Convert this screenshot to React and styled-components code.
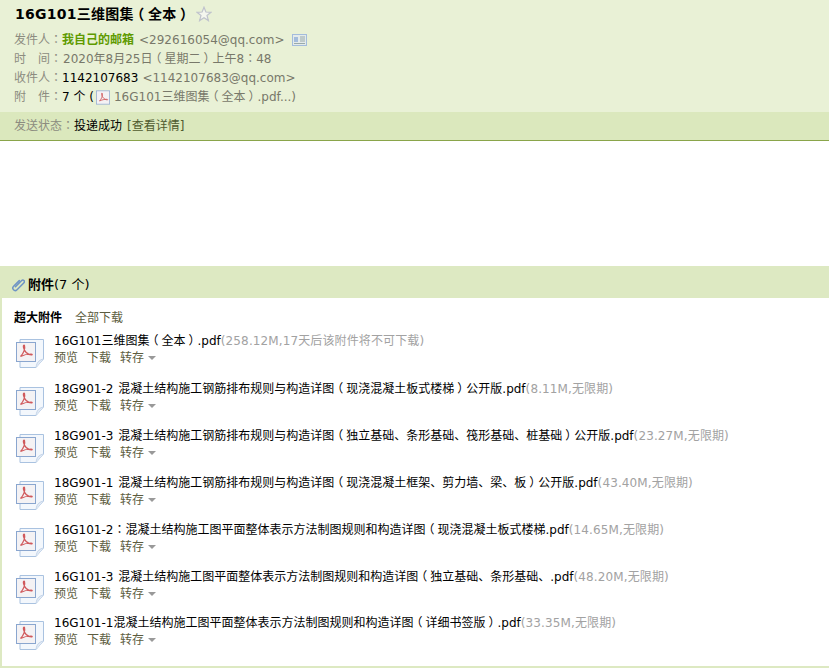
import React from 'react'
import styled, { createGlobalStyle } from 'styled-components'

const Global = createGlobalStyle`
  html, body { margin: 0; padding: 0; background: #fff; }
  body { font: 12px/20px "DejaVu Sans", "Noto Sans CJK SC", sans-serif; color: #000; }
`
const Page = styled.div`
  width: 829px;
  height: 672px;
  overflow: hidden;
`
const MailHead = styled.div`
  background: #e9f1d6;
  padding: 4px 0 6px 14px;
  height: 102px;
`
const Title = styled.div`
  display: flex;
  align-items: center;
  height: 20px;
  margin: 0 0 6px 1px;
  font-size: 14px;
  font-weight: bold;
  letter-spacing: 0.25px;
`
const Star = styled.svg`
  margin-left: 5px;
  flex: none;
`
const Line = styled.div`
  height: 19px;
  line-height: 19px;
  display: flex;
  align-items: center;
  white-space: nowrap;
  color: #000;
  &:nth-of-type(2) { height: 20px; }
`
const Label = styled.span`
  color: #8c8c80;
`
const Sender = styled.b`
  color: #5f9a00;
`
const Dim = styled.span`
  color: #78786a;
  margin-left: ${p => p.$gap || 0}px;
`
const Card = styled.svg`
  margin-left: 7px;
  flex: none;
`
const TinyPdf = styled.svg`
  margin: 0 4px 0 2px;
  flex: none;
`
const StatusBar = styled.div`
  height: 28px;
  line-height: 28px;
  padding-left: 14px;
  background: #dbe8bd;
  border-bottom: 1px solid #8aa54a;
`
const Link = styled.span`
  color: #4f5a2e;
  margin-left: ${p => p.$gap || 0}px;
`
const Blank = styled.div`
  height: 125px;
`
const AttachBox = styled.div`
  border: solid #dde9c2;
  border-width: 0 0 2px 2px;
  height: 402px;
  box-sizing: border-box;
`
const AttachHead = styled.div`
  display: flex;
  align-items: center;
  height: 27px;
  margin-left: -2px;
  padding: 5px 0 0 11px;
  background: #dde9c2;
  font-size: 13px;
`
const Clip = styled.svg`
  margin-right: 3px;
  flex: none;
`
const Body = styled.div`
  padding: 10px 0 0 12px;
`
const BigTitle = styled.div`
  height: 20px;
  line-height: 20px;
  margin-bottom: 5px;
`
const All = styled.span`
  color: #5c5c40;
  margin-left: 13px;
`
const Row = styled.div`
  display: flex;
  height: 47px;
  &:nth-of-type(2) { height: 48px; }
  &:nth-of-type(7) { height: 46px; }
`
const PdfIcon = styled.svg`
  flex: none;
  margin: 5px 10px 0 2px;
`
const Info = styled.div`
  display: flex;
  flex-direction: column;
  white-space: nowrap;
`
const Name = styled.div`
  height: 17px;
  line-height: 17px;
  word-spacing: 1px;
`
const Size = styled.span`
  color: #a2a2a2;
  letter-spacing: 0.12px;
`
const Actions = styled.div`
  display: flex;
  align-items: center;
  gap: 9px;
  height: 15px;
  color: #5c5c40;
`
const Caret = styled.i`
  display: inline-block;
  margin-left: 4px;
  border: 4px solid transparent;
  border-top: 4px solid #999;
  border-bottom: 0;
  vertical-align: middle;
`
// parens are centred in their cell in the reference, colons too
const Paren = styled.span`
  font-feature-settings: "halt";
  padding: 0 0.25em;
`
const Colon = styled.span`
  font-family: "DejaVu Sans", "Noto Sans CJK TC", sans-serif;
`

const Txt = ({ children }) =>
  children.split(/([（）：])/).map((part, i) => {
    if (i % 2 === 0) return part
    return part === '：' ? <Colon key={i}>{part}</Colon> : <Paren key={i}>{part}</Paren>
  })

const PdfMark = ({ color = '#d0595c' }) => (
  <path d="M5 15 C8 12 10 7 9 4 C8.5 3 7.5 4 8 6 C9 10 12 13 16 13.5 C17 13.5 17 12.5 15.5 12.5 C12 12.5 8 13.5 5 15Z" fill="none" stroke={color} strokeWidth="1.2" />
)

const AttachIcon = () => (
  <PdfIcon width="28" height="30" viewBox="0 0 28 30">
    <path d="M4 1.5 H27.5 V21 L20 29.5 H4Z" fill="#f3f7fc" stroke="#a9c2e0" />
    <path d="M27.5 21 C24 22 21 23 20 29.5" fill="#e4ecf6" stroke="#c3d3e8" />
    <rect x="0.5" y="4.5" width="19" height="19" fill="#f4f2f4" stroke="#8aa6cf" />
    <g transform="translate(-0.5 3.5)"><PdfMark /></g>
  </PdfIcon>
)

const files = [
  ['16G101三维图集（全本）.pdf', '(258.12M,17天后该附件将不可下载)'],
  ['18G901-2 混凝土结构施工钢筋排布规则与构造详图（现浇混凝土板式楼梯）公开版.pdf', '(8.11M,无限期)'],
  ['18G901-3 混凝土结构施工钢筋排布规则与构造详图（独立基础、条形基础、筏形基础、桩基础）公开版.pdf', '(23.27M,无限期)'],
  ['18G901-1 混凝土结构施工钢筋排布规则与构造详图（现浇混凝土框架、剪力墙、梁、板）公开版.pdf', '(43.40M,无限期)'],
  ['16G101-2：混凝土结构施工图平面整体表示方法制图规则和构造详图（现浇混凝土板式楼梯.pdf', '(14.65M,无限期)'],
  ['16G101-3 混凝土结构施工图平面整体表示方法制图规则和构造详图（独立基础、条形基础、.pdf', '(48.20M,无限期)'],
  ['16G101-1混凝土结构施工图平面整体表示方法制图规则和构造详图（详细书签版）.pdf', '(33.35M,无限期)'],
]

export default function App() {
  return (
    <Page>
      <Global />
      <MailHead>
        <Title>
          <span><Txt>16G101三维图集（全本）</Txt></span>
          <Star width="16" height="16" viewBox="0 0 16 16">
            <path d="M8 1.2 L9.9 6 L15 6.3 L11 9.5 L12.4 14.6 L8 11.8 L3.6 14.6 L5 9.5 L1 6.3 L6.1 6Z" fill="#f4f6ee" stroke="#bfc2cc" strokeWidth="1.2" />
          </Star>
        </Title>
        <Line>
          <Label><Txt>发件人：</Txt></Label><Sender>我自己的邮箱</Sender><Dim $gap={5}>&lt;292616054@qq.com&gt;</Dim>
          <Card width="15" height="12" viewBox="0 0 15 12">
            <rect x="0.5" y="0.5" width="14" height="11" fill="#e4ebea" stroke="#a3bcdc" />
            <rect x="2" y="3" width="4" height="5" fill="#a3bcdc" />
            <path d="M8 3h5M8 5h5M8 7h5M2 9.5h11" stroke="#9aa" />
          </Card>
        </Line>
        <Line><Label><Txt>时　间：</Txt></Label><Dim $gap={1}><Txt>2020年8月25日（星期二）上午8：48</Txt></Dim></Line>
        <Line><Label><Txt>收件人：</Txt></Label>1142107683<Dim $gap={4}>&lt;1142107683@qq.com&gt;</Dim></Line>
        <Line>
          <Label><Txt>附　件：</Txt></Label>7 个 (
          <TinyPdf width="14" height="15" viewBox="0 0 20 20">
            <rect x="0.5" y="0.5" width="19" height="19" fill="#f4f2f4" stroke="#8aa6cf" />
            <PdfMark />
          </TinyPdf>
          <Dim><Txt>16G101三维图集（全本）.pdf...)</Txt></Dim>
        </Line>
      </MailHead>
      <StatusBar>
        <Label><Txt>发送状态：</Txt></Label>投递成功<Link $gap={5}>[查看详情]</Link>
      </StatusBar>
      <Blank />
      <AttachBox>
        <AttachHead>
          <Clip width="14" height="14" viewBox="0 0 14 14">
            <g transform="rotate(45 7 7)" fill="none" strokeLinecap="round">
              <path d="M4.8 3 V11 C4.8 14.4 9.6 14.4 9.6 11 V1.5 C9.6 -1 6.4 -1 6.4 1.5 V10" stroke="#6f94c4" strokeWidth="1.5" />
            </g>
          </Clip>
          <b>附件</b>(7 个)
        </AttachHead>
        <Body>
          <BigTitle><b>超大附件</b><All>全部下载</All></BigTitle>
          {files.map(([name, size]) => (
            <Row key={name}>
              <AttachIcon />
              <Info>
                <Name><Txt>{name}</Txt><Size>{size}</Size></Name>
                <Actions>
                  <span>预览</span><span>下载</span><span>转存<Caret /></span>
                </Actions>
              </Info>
            </Row>
          ))}
        </Body>
      </AttachBox>
    </Page>
  )
}
